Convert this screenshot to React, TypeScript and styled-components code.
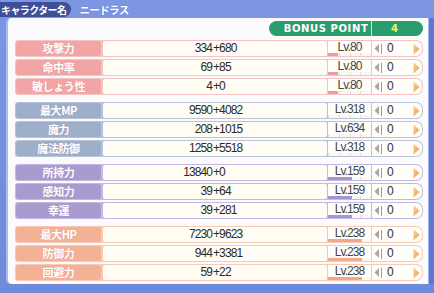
import React from "react";
import styled, { createGlobalStyle } from "styled-components";

const Global = createGlobalStyle`
  html, body { margin: 0; padding: 0; background: #7890dc; }
  * { box-sizing: border-box; }
`;

type Theme = { label: string; edge: string; bar: string };

const themes: Record<string, Theme> = {
  atk: { label: "#f2a5a5", edge: "#f4c3c3", bar: "#f09c9c" },
  mag: { label: "#9eaecb", edge: "#b8c3da", bar: "#9eaecb" },
  luk: { label: "#a99bd0", edge: "#c3b8e2", bar: "#a595d2" },
  hp: { label: "#f3b196", edge: "#f6cab4", bar: "#f1a888" },
};

type RowData = { name: string; base: string; bonus: string; lv: string; fill: number };
type Group = { theme: Theme; rows: RowData[] };

const groups: Group[] = [
  {
    theme: themes.atk,
    rows: [
      { name: "攻撃力", base: "334", bonus: "680", lv: "80", fill: 0.23 },
      { name: "命中率", base: "69", bonus: "85", lv: "80", fill: 0.23 },
      { name: "敏しょう性", base: "4", bonus: "0", lv: "80", fill: 0.23 },
    ],
  },
  {
    theme: themes.mag,
    rows: [
      { name: "最大MP", base: "9590", bonus: "4082", lv: "318", fill: 0 },
      { name: "魔力", base: "208", bonus: "1015", lv: "634", fill: 0 },
      { name: "魔法防御", base: "1258", bonus: "5518", lv: "318", fill: 0 },
    ],
  },
  {
    theme: themes.luk,
    rows: [
      { name: "所持力", base: "13840", bonus: "0", lv: "159", fill: 0.55 },
      { name: "感知力", base: "39", bonus: "64", lv: "159", fill: 0.55 },
      { name: "幸運", base: "39", bonus: "281", lv: "159", fill: 0.55 },
    ],
  },
  {
    theme: themes.hp,
    rows: [
      { name: "最大HP", base: "7230", bonus: "9623", lv: "238", fill: 0.8 },
      { name: "防御力", base: "944", bonus: "3381", lv: "238", fill: 0.78 },
      { name: "回避力", base: "59", bonus: "22", lv: "238", fill: 0.8 },
    ],
  },
];

const Frame = styled.div`
  width: 434px;
  height: 293px;
  display: flex;
  flex-direction: column;
  background: linear-gradient(#7d96e2, #6f8ad9);
  overflow: hidden;
`;

const TitleBar = styled.div`
  height: 18px;
  display: flex;
  align-items: center;
  padding-top: 1px;
  gap: 8px;
`;

const NameTag = styled.div`
  height: 15px;
  padding: 0 5px 0 1px;
  background: #3d4f96;
  border-radius: 0 8px 8px 0;
  color: #fff;
  font: bold 10px "Noto Sans CJK JP", sans-serif;
  letter-spacing: -0.6px;
  line-height: 15px;
  white-space: nowrap;
`;

const NameValue = styled.div`
  color: #fff;
  font: bold 10.5px "Noto Sans CJK JP", sans-serif;
  letter-spacing: -0.6px;
  line-height: 15px;
  text-shadow: 0 0 1px #5670c0;
`;

const Body = styled.div`
  flex: 1;
  display: flex;
  padding: 0 0 9px 6px;
`;

const Panel = styled.div`
  flex: 1;
  background: #fbfbfe;
  border-left: 2px solid #a9bbf0;
  border-radius: 5px 0 0 5px;
  padding: 3px 5px 0 7px;
  display: flex;
  flex-direction: column;
`;

const RightStrip = styled.div`
  width: 6px;
  background: linear-gradient(90deg, #a4b6ee 0 1px, #5b77cf 1px);
`;

const BonusRow = styled.div`
  display: flex;
  justify-content: flex-end;
  height: 15px;
  margin-bottom: 4px;
`;

const BonusPill = styled.div`
  width: 154px;
  height: 15px;
  display: flex;
  background: #2b9c6b;
  border-radius: 8px;
  color: #fff;
  font: bold 10px "DejaVu Sans", sans-serif;
  line-height: 15px;
`;

const BonusLabel = styled.div`
  width: 103px;
  text-align: center;
  padding-left: 12px;
  letter-spacing: 0.6px;
  border-right: 1px solid #c9ead9;
`;

const BonusValue = styled.div`
  flex: 1;
  text-align: center;
  color: #f2f45a;
  padding-right: 6px;
`;

const Groups = styled.div`
  display: flex;
  flex-direction: column;
  gap: 7px;
`;

const GroupBox = styled.div`
  display: flex;
  flex-direction: column;
  gap: 2px;
`;

const Row = styled.div<{ $edge: string }>`
  height: 17px;
  display: flex;
  gap: 1px;
  padding: 1px;
  background: ${(p) => p.$edge};
  border-radius: 3px 7px 7px 3px;
`;

const Label = styled.div<{ $bg: string }>`
  width: 85px;
  margin-right: 1px;
  background: ${(p) => p.$bg};
  border-radius: 2px;
  color: #fff;
  font: bold 11px "Noto Sans CJK JP", sans-serif;
  letter-spacing: -0.4px;
  line-height: 15px;
  text-align: center;
  text-shadow: 0 0 1px rgba(180, 90, 90, 0.25);
`;

const Value = styled.div`
  flex: 1;
  display: flex;
  background: #fffdf4;
  border-radius: 2px;
  font: 12px "Liberation Sans", Arial, sans-serif;
  letter-spacing: -0.9px;
  line-height: 15px;
  color: #2a2a2a;
`;

const Base = styled.span`
  width: 109px;
  text-align: right;
`;

const Bonus = styled.span`
  padding-left: 1px;
`;

const LvBox = styled.div`
  width: 43px;
  display: flex;
  flex-direction: column;
  background: #fffefb;
`;

const LvText = styled.div`
  height: 12px;
  font: 12px "Liberation Sans", Arial, sans-serif;
  letter-spacing: -0.9px;
  line-height: 12px;
  color: #444;
  text-align: center;
`;

const LvBar = styled.div`
  height: 3px;
  position: relative;
  background: #fbf7f3;
  display: grid;
  grid-template-columns: repeat(4, 1fr);
`;

const Tick = styled.div`
  border-left: 1px solid #e2dede;
  &:first-child { border-left: none; }
`;

const Fill = styled.div<{ $c: string }>`
  position: absolute;
  left: 0;
  top: 0;
  bottom: 0;
  background: ${(p) => p.$c};
`;

const Stepper = styled.div`
  width: 50px;
  display: flex;
  align-items: center;
  background: #fffef8;
  border-radius: 0 6px 6px 0;
  padding: 0 2px 0 2px;
  font: 12px "Liberation Sans", Arial, sans-serif;
  color: #333;
`;

const StepNum = styled.span`
  flex: 1;
  padding-left: 4px;
  line-height: 15px;
`;

const LeftArrow = () => (
  <svg width="9" height="11" viewBox="0 0 9 11">
    <path d="M5 1 L0.5 5.5 L5 10 Z" fill="#a6a6a6" />
    <rect x="7" y="1" width="1" height="10" fill="#9a9a9a" />
  </svg>
);

const RightArrow = () => (
  <svg width="7" height="12" viewBox="0 0 7 12">
    <defs>
      <linearGradient id="ra" x1="0" y1="0" x2="1" y2="1">
        <stop offset="0" stopColor="#fbd4a0" />
        <stop offset="1" stopColor="#eb9a3c" />
      </linearGradient>
    </defs>
    <path d="M0.5 0.5 L6.5 6 L0.5 11.5 Z" fill="url(#ra)" />
  </svg>
);

export default function App() {
  return (
    <>
      <Global />
      <Frame>
        <TitleBar>
          <NameTag>キャラクター名</NameTag>
          <NameValue>ニードラス</NameValue>
        </TitleBar>
        <Body>
          <Panel>
            <BonusRow>
              <BonusPill>
                <BonusLabel>BONUS POINT</BonusLabel>
                <BonusValue>4</BonusValue>
              </BonusPill>
            </BonusRow>
            <Groups>
              {groups.map((g, gi) => (
                <GroupBox key={gi}>
                  {g.rows.map((r) => (
                    <Row key={r.name} $edge={g.theme.edge}>
                      <Label $bg={g.theme.label}>{r.name}</Label>
                      <Value>
                        <Base>{r.base}</Base>
                        <Bonus>+{r.bonus}</Bonus>
                      </Value>
                      <LvBox>
                        <LvText>Lv.{r.lv}</LvText>
                        <LvBar>
                          <Fill $c={g.theme.bar} style={{ width: `${r.fill * 100}%` }} />
                          <Tick />
                          <Tick />
                          <Tick />
                          <Tick />
                        </LvBar>
                      </LvBox>
                      <Stepper>
                        <LeftArrow />
                        <StepNum>0</StepNum>
                        <RightArrow />
                      </Stepper>
                    </Row>
                  ))}
                </GroupBox>
              ))}
            </Groups>
          </Panel>
          <RightStrip />
        </Body>
      </Frame>
    </>
  );
}
